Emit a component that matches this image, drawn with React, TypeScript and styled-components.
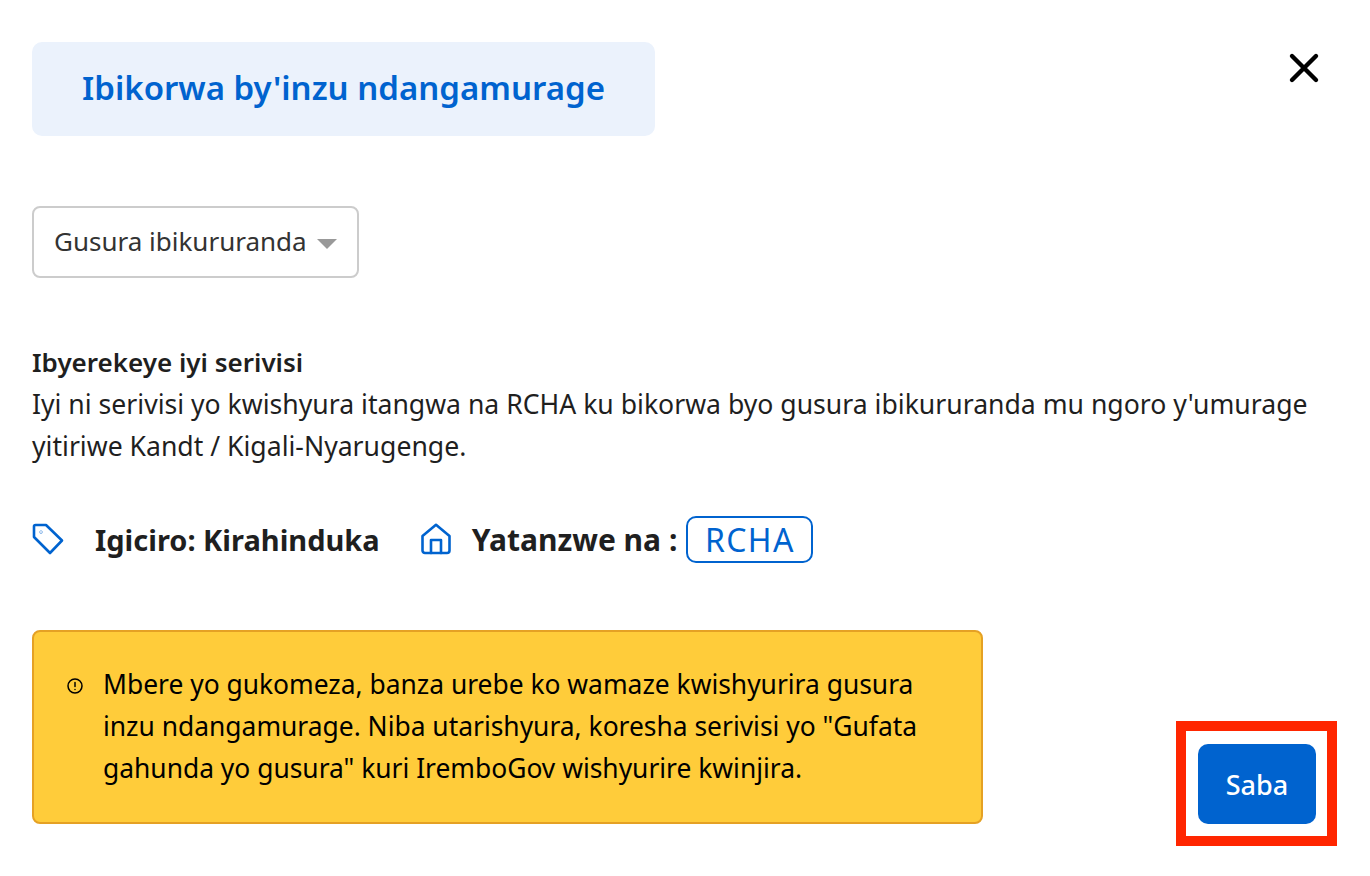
import styled, { createGlobalStyle } from 'styled-components'

const GlobalStyle = createGlobalStyle`
    body {
        margin: 0;
        background: #fff;
        font-family: "Noto Sans", "Open Sans", sans-serif;
        color: #1f1f1f;
    }
`

const Page = styled.div`
    position: relative;
    box-sizing: border-box;
    width: 1370px;
    height: 876px;
    padding: 42px 50px 0 32px;
`

const Header = styled.div`
    display: flex;
    justify-content: space-between;
    align-items: flex-start;
`

const TitleCard = styled.div`
    width: 623px;
    height: 94px;
    display: flex;
    align-items: center;
    justify-content: center;
    background: #ebf2fc;
    border-radius: 10px;
`

const Title = styled.h1`
    margin: 0 0 4px;
    font-size: 33px;
    font-weight: 600;
    color: #0063cf;
`

const CloseButton = styled.button`
    display: flex;
    padding: 0;
    margin-top: 10px;
    border: 0;
    background: none;
    color: #000;
`

const Dropdown = styled.div`
    box-sizing: border-box;
    width: 327px;
    height: 72px;
    margin-top: 70px;
    padding: 0 20px 2px 20px;
    display: flex;
    align-items: center;
    justify-content: space-between;
    background: #fff;
    border: 2px solid #cccccc;
    border-radius: 8px;
    font-size: 26px;
    color: #333;
`

const Caret = styled.span`
    width: 0;
    height: 0;
    margin-top: 6px;
    border-left: 10px solid transparent;
    border-right: 10px solid transparent;
    border-top: 10px solid #999;
`

const About = styled.section`
    margin-top: 63px;
    font-size: 26.6px;
    line-height: 42px;
`

const AboutHeading = styled.div`
    font-size: 26px;
    font-weight: 600;
`

const AboutText = styled.p`
    margin: 0;
`

const Meta = styled.div`
    margin-top: 49px;
    height: 46px;
    display: flex;
    align-items: center;
    font-weight: 700;
`

const MetaLabel = styled.span<{ $size: number }>`
    font-size: ${props => props.$size}px;
`

const MetaIcon = styled.svg<{ $left: number; $right: number }>`
    flex: none;
    width: 32px;
    height: 32px;
    margin-left: ${props => props.$left}px;
    margin-right: ${props => props.$right}px;
    fill: none;
    stroke: #0063cf;
    stroke-width: 2.6;
    stroke-linecap: round;
    stroke-linejoin: round;
`

const OwnerTag = styled.span`
    margin-left: 9px;
    box-sizing: border-box;
    width: 127px;
    height: 47px;
    display: flex;
    align-items: center;
    justify-content: center;
    border: 2px solid #0063cf;
    border-radius: 10px;
    font-size: 32px;
    font-weight: 400;
    letter-spacing: 1.4px;
    color: #0063cf;
`

const Footer = styled.div`
    margin: 68px 4px 0 0;
    display: flex;
    justify-content: space-between;
    align-items: flex-end;
`

const Notice = styled.div`
    box-sizing: border-box;
    width: 951px;
    height: 194px;
    padding: 31px 30px 0 32px;
    display: flex;
    background: #ffcc3a;
    border: 2px solid #e5a124;
    border-radius: 8px;
    font-size: 26.4px;
    line-height: 42px;
    color: #000;
`

const NoticeIcon = styled.svg`
    flex: none;
    width: 18px;
    height: 18px;
    margin: 14px 19px 0 0;
    fill: none;
    stroke: #000;
    stroke-width: 1.5;
    stroke-linecap: round;
`

const SendButton = styled.button`
    width: 118px;
    height: 80px;
    border: 0;
    border-radius: 10px;
    background: #0063cf;
    color: #fff;
    font-family: inherit;
    font-size: 27px;
    font-weight: 500;
`

const Highlight = styled.div`
    position: absolute;
    left: 1176px;
    top: 721px;
    box-sizing: border-box;
    width: 161px;
    height: 125px;
    border: 10px solid #ff2600;
    pointer-events: none;
`

const CloseIcon = () => (
    <svg width="32" height="32" viewBox="0 0 32 32" fill="none" stroke="currentColor" strokeWidth="4.4" strokeLinecap="round">
        <path d="M4 4 L28 28 M28 4 L4 28" />
    </svg>
)

const App = () => {
    return (
        <Page>
            <GlobalStyle />
            <Header>
                <TitleCard>
                    <Title>Ibikorwa by'inzu ndangamurage</Title>
                </TitleCard>
                <CloseButton>
                    <CloseIcon />
                </CloseButton>
            </Header>
            <Dropdown>
                Gusura ibikururanda
                <Caret />
            </Dropdown>
            <About>
                <AboutHeading>Ibyerekeye iyi serivisi</AboutHeading>
                <AboutText>
                    Iyi ni serivisi yo kwishyura itangwa na RCHA ku bikorwa byo gusura ibikururanda mu ngoro y'umurage
                    <br />
                    yitiriwe Kandt / Kigali-Nyarugenge.
                </AboutText>
            </About>
            <Meta>
                <MetaIcon viewBox="0 0 32 32" $left={0} $right={31}>
                    <path d="M2 3.5 A1.5 1.5 0 0 1 3.5 2 H14 L30 17.5 L18 30 L2 14 Z" />
                    <circle cx="9" cy="9" r="0.2" />
                </MetaIcon>
                <MetaLabel $size={29}>Igiciro: Kirahinduka</MetaLabel>
                <MetaIcon viewBox="0 0 32 32" $left={40} $right={20}>
                    <path d="M2.5 13 L16 1.8 L29.5 13 V27.5 A2.5 2.5 0 0 1 27 30 H5 A2.5 2.5 0 0 1 2.5 27.5 Z" />
                    <path d="M11 30 V17 H21 V30" />
                </MetaIcon>
                <MetaLabel $size={30}>Yatanzwe na :</MetaLabel>
                <OwnerTag>RCHA</OwnerTag>
            </Meta>
            <Footer>
                <Notice>
                    <NoticeIcon viewBox="0 0 18 18">
                        <circle cx="9" cy="9" r="7" />
                        <path d="M9 5.5 V9.5 M9 12.5 V12.6" />
                    </NoticeIcon>
                    <div>
                        Mbere yo gukomeza, banza urebe ko wamaze kwishyurira gusura inzu ndangamurage. Niba utarishyura, koresha serivisi yo "Gufata gahunda yo gusura" kuri IremboGov wishyurire kwinjira.
                    </div>
                </Notice>
                <SendButton>Saba</SendButton>
            </Footer>
            <Highlight />
        </Page>
    )
}

export default App
